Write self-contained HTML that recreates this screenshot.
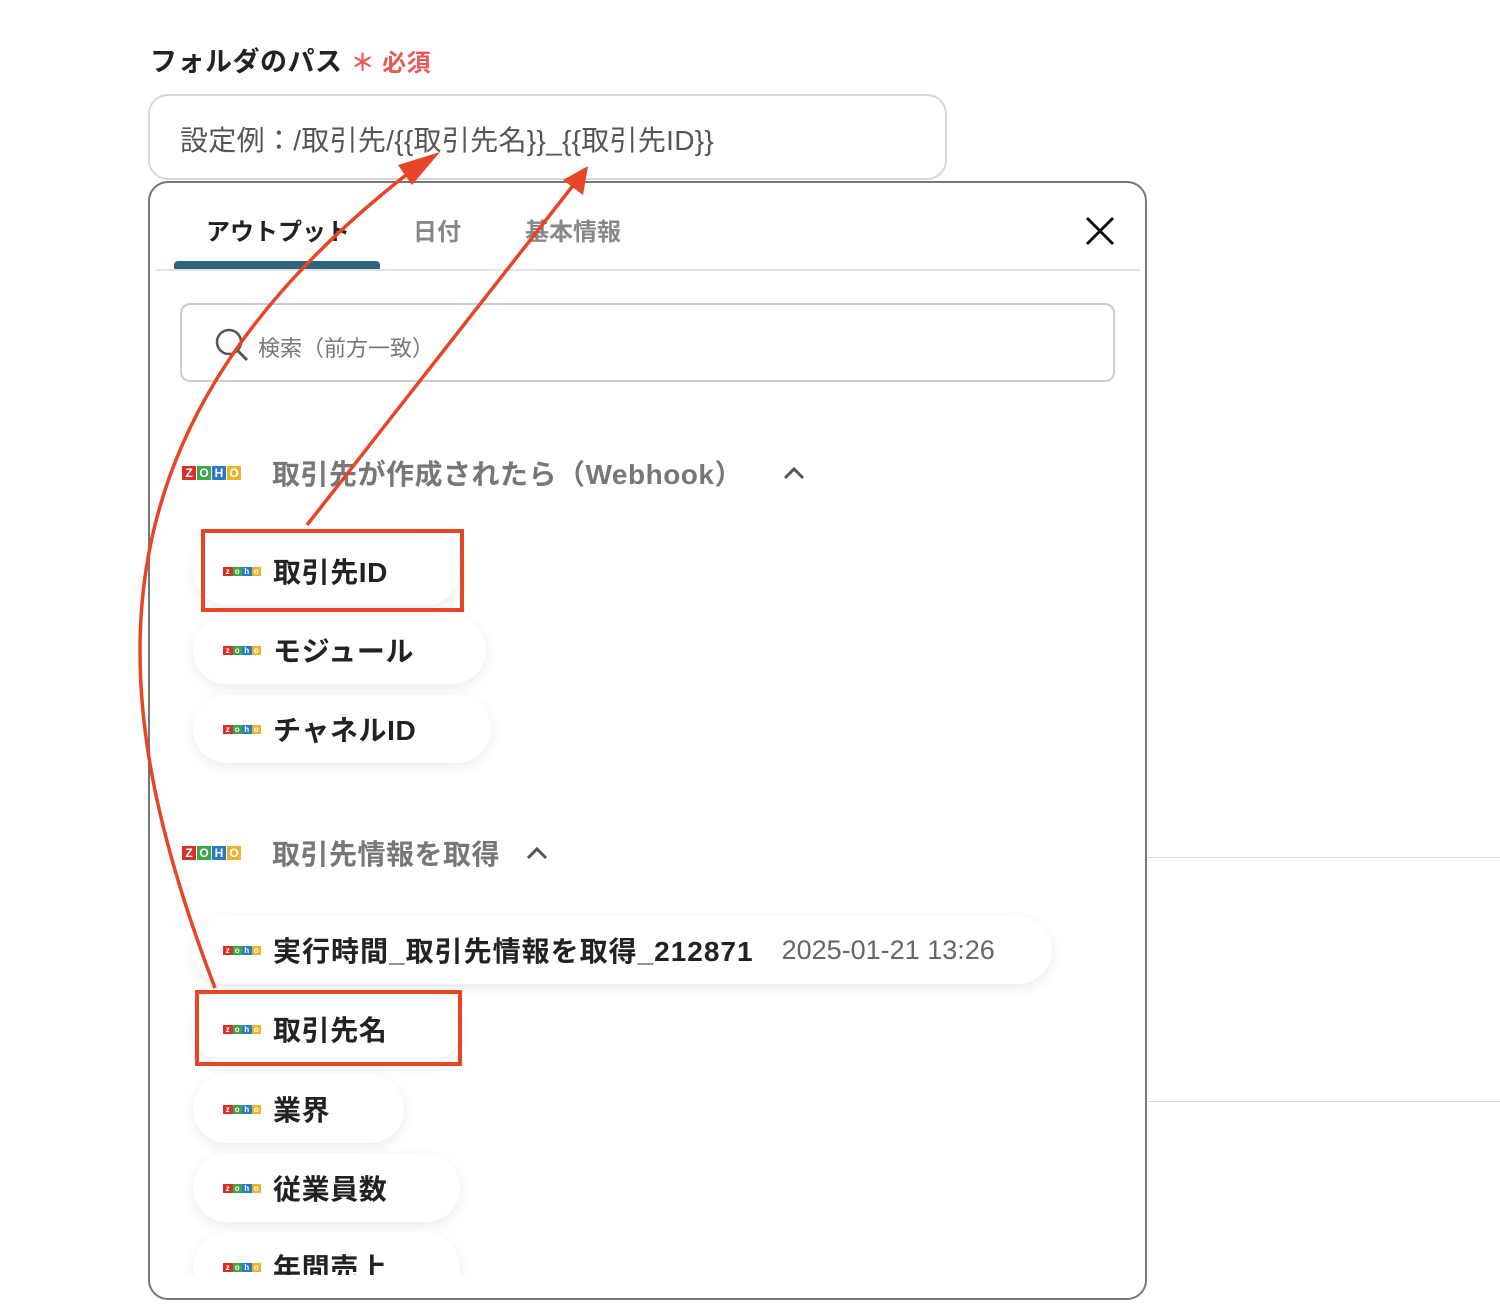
<!DOCTYPE html>
<html><head><meta charset="utf-8"><style>
*{margin:0;padding:0;box-sizing:border-box}
body{width:1500px;height:1306px;background:#fff;position:relative;overflow:hidden;font-family:"Liberation Sans","Noto Sans CJK JP",sans-serif;color:#222}
.a{position:absolute}
.pill{position:absolute;left:193px;height:68px;border-radius:34px;background:#fff;box-shadow:0 4px 14px rgba(0,0,0,.08);display:flex;align-items:center;padding-left:30px;font-size:28px;font-weight:bold;color:#222;white-space:nowrap;letter-spacing:0.6px}
.zs{display:inline-flex;margin-right:12px}
.zs i{display:block;width:9.5px;height:9px;font-style:normal;font-size:8px;line-height:9px;color:#fff;text-align:center;font-weight:bold;letter-spacing:0}
.zl{display:inline-flex}
.zl i{display:block;width:14px;height:14px;font-style:normal;font-size:12px;line-height:14px;color:#fff;text-align:center;font-weight:bold;margin-right:1px;letter-spacing:0}
.r{background:#d8312a}.g{background:#3da74a}.b{background:#2a7bc4}.y{background:#e9b52b}
.hdr{position:absolute;left:182px;display:flex;align-items:center;font-size:28px;font-weight:bold;color:#777;letter-spacing:0.5px}
.box{position:absolute;border:4px solid #e84426}
</style></head><body>
<div class="a" style="left:150px;top:40px;font-size:27px;font-weight:bold;color:#222;letter-spacing:0.5px">フォルダのパス <span style="color:#e85a5a;font-size:24px">＊ 必須</span></div>
<div class="a" style="left:148px;top:94px;width:799px;height:86px;border:2px solid #d4d8dc;border-radius:20px;padding:23px 0 0 30px;font-size:28px;color:#555;letter-spacing:0.3px">設定例：/取引先/{{取引先名}}_{{取引先ID}}</div>
<div class="a" style="left:1147px;top:857px;width:353px;height:1px;background:#ddd"></div>
<div class="a" style="left:1147px;top:1101px;width:353px;height:1px;background:#ddd"></div>
<div class="a" style="left:148px;top:181px;width:999px;height:1119px;border:2px solid #777;border-radius:20px;overflow:hidden;background:#fff">
</div>
<div class="a" style="left:206px;top:212px;font-size:24px;font-weight:bold;color:#222">アウトプット</div>
<div class="a" style="left:413px;top:212px;font-size:24px;font-weight:bold;color:#888">日付</div>
<div class="a" style="left:525px;top:212px;font-size:24px;font-weight:bold;color:#888">基本情報</div>
<svg class="a" style="left:1084px;top:215px" width="32" height="32"><path d="M3 3L29 29M29 3L3 29" stroke="#111" stroke-width="3"/></svg>
<div class="a" style="left:174px;top:261px;width:206px;height:8px;background:#2e6480;border-radius:4px 4px 0 0"></div>
<div class="a" style="left:156px;top:269px;width:984px;height:2px;background:#e4e4e4"></div>
<div class="a" style="left:180px;top:303px;width:935px;height:79px;border:2px solid #ccc;border-radius:10px"></div>
<svg class="a" style="left:214px;top:327px" width="36" height="36"><circle cx="15" cy="15" r="12" fill="none" stroke="#555" stroke-width="2.5"/><path d="M24 24L33 33" stroke="#555" stroke-width="3"/></svg>
<div class="a" style="left:258px;top:331px;font-size:22px;color:#777">検索（前方一致）</div>

<div class="hdr" style="top:453px"><span class="zl" style="margin-right:30px"><i class="r">Z</i><i class="g">O</i><i class="b">H</i><i class="y">O</i></span>取引先が作成されたら（Webhook）<svg style="margin-left:40px" width="22" height="14"><path d="M2 12L11 3L20 12" fill="none" stroke="#555" stroke-width="3"/></svg></div>
<div class="pill" style="top:537px;width:267px"><span class="zs"><i class="r">z</i><i class="g">o</i><i class="b">h</i><i class="y">o</i></span>取引先ID</div>
<div class="pill" style="top:616px;width:293px"><span class="zs"><i class="r">z</i><i class="g">o</i><i class="b">h</i><i class="y">o</i></span>モジュール</div>
<div class="pill" style="top:695px;width:298px"><span class="zs"><i class="r">z</i><i class="g">o</i><i class="b">h</i><i class="y">o</i></span>チャネルID</div>

<div class="hdr" style="top:833px"><span class="zl" style="margin-right:30px"><i class="r">Z</i><i class="g">O</i><i class="b">H</i><i class="y">O</i></span>取引先情報を取得<svg style="margin-left:26px" width="22" height="14"><path d="M2 12L11 3L20 12" fill="none" stroke="#555" stroke-width="3"/></svg></div>
<div class="pill" style="top:916px;width:859px"><span class="zs"><i class="r">z</i><i class="g">o</i><i class="b">h</i><i class="y">o</i></span><span style="letter-spacing:1px">実行時間_取引先情報を取得_212871</span><span style="font-weight:normal;color:#666;font-size:27px;margin-left:28px;letter-spacing:0">2025-01-21 13:26</span></div>
<div class="pill" style="top:995px;width:267px"><span class="zs"><i class="r">z</i><i class="g">o</i><i class="b">h</i><i class="y">o</i></span>取引先名</div>
<div class="pill" style="top:1075px;width:211px"><span class="zs"><i class="r">z</i><i class="g">o</i><i class="b">h</i><i class="y">o</i></span>業界</div>
<div class="pill" style="top:1154px;width:267px"><span class="zs"><i class="r">z</i><i class="g">o</i><i class="b">h</i><i class="y">o</i></span>従業員数</div>
<div class="a" style="left:150px;top:1233px;width:995px;height:42px;overflow:hidden"><div class="pill" style="left:43px;top:0;width:267px"><span class="zs"><i class="r">z</i><i class="g">o</i><i class="b">h</i><i class="y">o</i></span>年間売上</div></div>

<div class="box" style="left:201px;top:529px;width:263px;height:83px"></div>
<div class="box" style="left:195px;top:990px;width:267px;height:76px"></div>

<svg class="a" style="left:0;top:0" width="1500" height="1306">
<path d="M215 988 C105 700, 75 430, 415 168" fill="none" stroke="#e84426" stroke-width="3.5"/>
<polygon points="440,152 412,185 398,165" fill="#e84426"/>
<path d="M307 525 L575 183" fill="none" stroke="#e84426" stroke-width="3.5"/>
<polygon points="588,166 583,195 563,180" fill="#e84426"/>
</svg>
</body></html>
